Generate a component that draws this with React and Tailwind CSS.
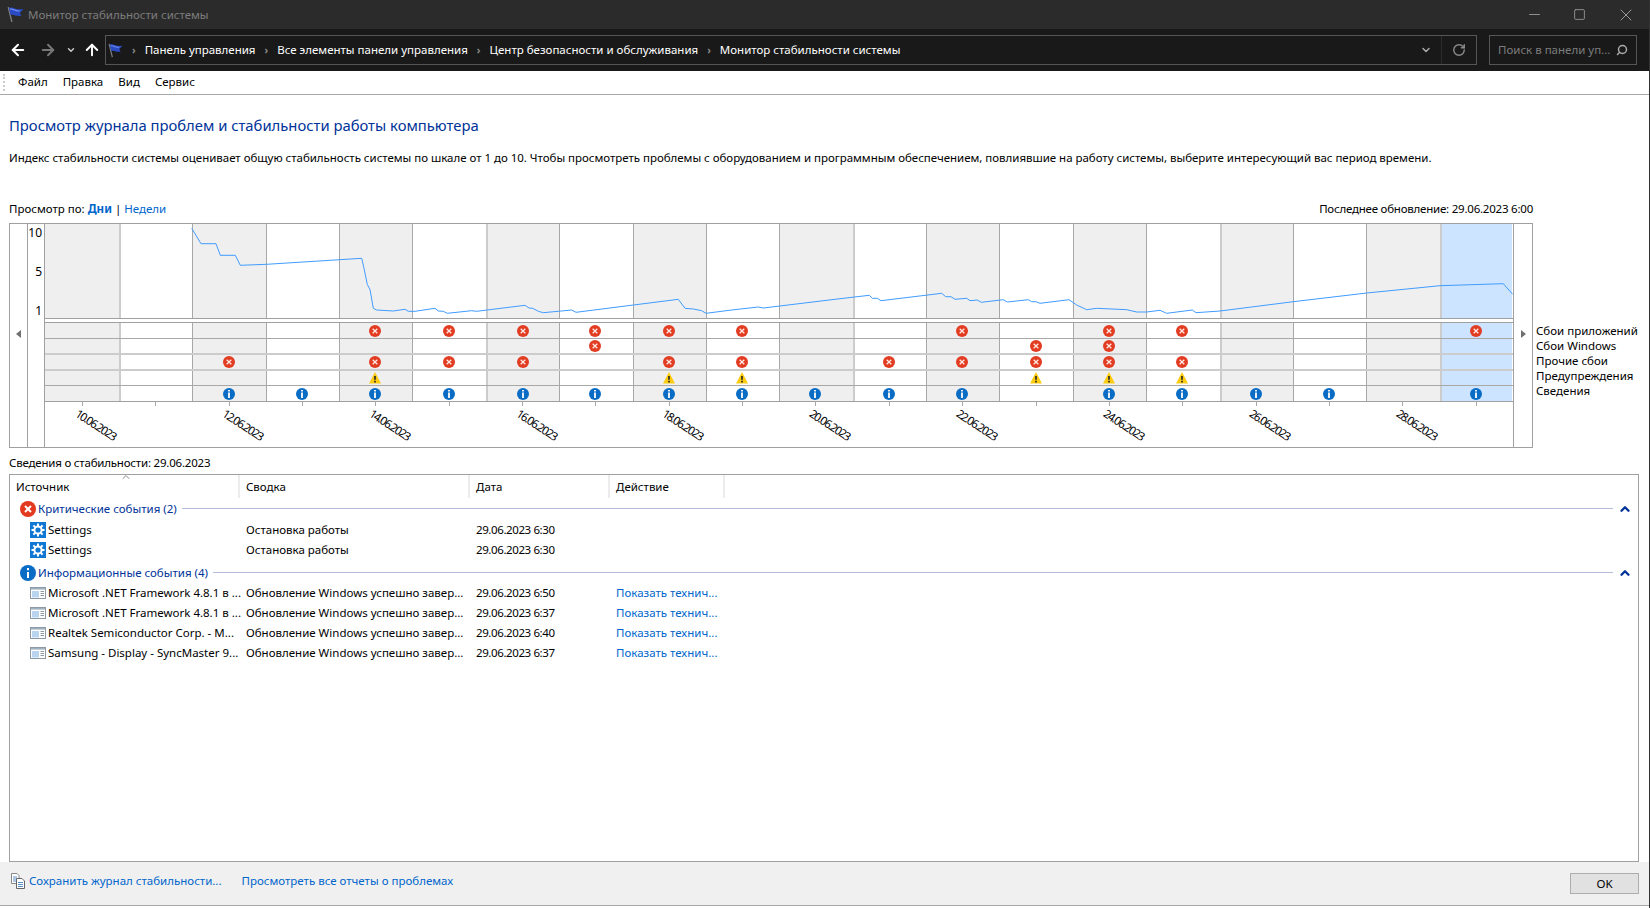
import React from 'react';
import { ArrowLeft, ArrowRight, ArrowUp, ChevronDown, ChevronUp, RotateCw, Search, Minus, Square, X } from 'lucide-react';

const FONT = 'font-["Noto_Sans",sans-serif]';
const DAY_GRID = 'grid grid-cols-[74px_repeat(19,1fr)]';

const DAYS = 20;
const CRASH_ROWS = [
  { kind: 'err', cols: [4, 5, 6, 7, 8, 9, 12, 14, 15, 19], line: 'h-[16px] border-b border-[#a8a8a8]' },
  { kind: 'err', cols: [7, 13, 14], line: 'h-[16px] border-b-2 border-[#cccccc]' },
  { kind: 'err', cols: [2, 4, 5, 6, 8, 9, 11, 12, 13, 14, 15], line: 'h-[16px] border-b-2 border-[#cccccc]' },
  { kind: 'warn', cols: [4, 8, 9, 13, 14, 15], line: 'h-[15px] border-b border-[#a8a8a8]' },
  { kind: 'info', cols: [2, 3, 4, 5, 6, 7, 8, 9, 10, 11, 12, 14, 15, 16, 17, 19], line: 'h-[16px] border-b border-[#a0a0a0]' },
];

const THICK_LINES = [1, 6, 11, 16, 19];

// page coordinates, read off the reference
const INDEX_LINE = [
  [191.7, 228.3], [201, 243.7], [216, 243.7], [220.3, 255.3], [235.3, 255.3], [240.3, 265.3], [266.7, 264.3],
  [361.7, 258.3], [364, 268.3], [367.3, 284.5], [370, 289.5], [373.3, 308.3], [376.7, 310], [393.3, 311],
  [405, 309.3], [408.3, 311.3], [415, 311.3], [435, 308.3], [438.3, 311], [443.3, 311.3], [447.3, 313.3],
  [471.7, 310.7], [476.7, 311.3], [525, 305.3], [529, 308], [532.7, 308.3], [538.3, 311.3], [543.3, 312.7],
  [571.7, 310], [576, 312.3], [678.3, 299.3], [685, 308.3], [693.3, 309], [701.7, 310.7], [706, 313.3],
  [731.7, 310], [758.3, 307], [763.3, 308], [840, 298.7], [869.3, 295.3], [872.3, 298.3], [877.3, 298.3],
  [881, 300.7], [941.7, 293.3], [945.7, 296.7], [951, 296.7], [955, 299.3], [966.7, 298.3], [970, 300.7],
  [977.3, 300], [981.3, 302.3], [1003.3, 299.7], [1007.3, 302], [1028.3, 299.7], [1031.7, 301.7], [1036, 301.7],
  [1040, 303.3], [1069, 299.7], [1076.7, 305], [1086.7, 309.7], [1096.7, 308.3], [1126.7, 309.7], [1136.7, 312],
  [1146.7, 312], [1160, 310.3], [1166.7, 313.3], [1192.3, 310], [1196, 312.7], [1220, 311], [1293.3, 301.7],
  [1366.7, 293], [1440, 285.7], [1503.3, 283.7], [1512.7, 294.3],
];

const FlagIcon = ({ className }) => (
  <svg viewBox="0 0 16 16" className={className}>
    <path d="M1.2 1 L4.6 15" stroke="#808080" strokeWidth="1.3" />
    <path d="M1.8 1.8 C5 0 7.5 4 15.5 3 L12 6.5 L13.5 9.2 C8.5 10.2 6 7.2 3.4 8.6 Z" fill="#2a4bc4" />
    <path d="M2.8 3 C5 2.2 7.5 5 12 4.6" stroke="#7893f2" strokeWidth="1" fill="none" />
  </svg>
);

const ErrorDot = () => (
  <svg viewBox="0 0 12 12" className="w-3 h-3">
    <circle cx="6" cy="6" r="6" fill="#e23c22" />
    <path d="M3.7 3.7 L8.3 8.3 M8.3 3.7 L3.7 8.3" stroke="#ffe9e4" strokeWidth="1.3" />
  </svg>
);

const WarnDot = () => (
  <svg viewBox="0 0 12 12" className="w-3 h-3">
    <path d="M6 0 L12 11.6 L0 11.6 Z" fill="#fccb12" />
    <path d="M6 4 L6 7.8 M6 8.8 L6 10.4" stroke="#222" strokeWidth="1.6" />
  </svg>
);

const InfoDot = () => (
  <svg viewBox="0 0 12 12" className="w-3 h-3">
    <circle cx="6" cy="6" r="6" fill="#0a6cc4" />
    <path d="M6 2 V3.4 M6 4.4 V10" stroke="#fff" strokeWidth="1.8" />
  </svg>
);

const SettingsIcon = () => (
  <svg viewBox="0 0 16 16" className="w-4 h-4 shrink-0">
    <rect width="16" height="16" fill="#0f78d4" />
    <circle cx="8" cy="8" r="3.6" fill="none" stroke="#fff" strokeWidth="2" />
    <path d="M8 1.5 V4 M8 12 V14.5 M1.5 8 H4 M12 8 H14.5 M3.4 3.4 L5.2 5.2 M10.8 10.8 L12.6 12.6 M12.6 3.4 L10.8 5.2 M5.2 10.8 L3.4 12.6" stroke="#fff" strokeWidth="2" />
  </svg>
);

const UpdateIcon = () => (
  <svg viewBox="0 0 16 16" className="w-4 h-4 shrink-0">
    <rect x="0.5" y="2.5" width="15" height="11" fill="#fff" stroke="#8d9aa6" />
    <rect x="1" y="3" width="14" height="1.6" fill="#9fb0bf" />
    <rect x="2" y="6" width="7" height="6.5" fill="#b9d4ee" />
    <path d="M10.5 6.5 H14 M10.5 8.5 H14 M10.5 10.5 H14" stroke="#8d9aa6" />
  </svg>
);

const DocsIcon = () => (
  <svg viewBox="0 0 16 16" className="w-4 h-4 shrink-0">
    <path d="M1.5 0.5 H7 L9 2.5 V10.5 H1.5 Z" fill="#fff" stroke="#888" />
    <path d="M3 4 H7 M3 6 H7 M3 8 H7" stroke="#5a8fc8" />
    <path d="M6.5 5.5 H12 L14.5 8 V15.5 H6.5 Z" fill="#fff" stroke="#666" />
    <path d="M8 9.5 H13 M8 11.5 H13 M8 13.5 H13" stroke="#5a8fc8" />
  </svg>
);

const Crumb = ({ children }) => (
  <>
    <span className="mx-[9px] text-[10px] font-bold text-[#8a8a8a]">›</span>
    <span className="text-white">{children}</span>
  </>
);

const ReliabilityChart = () => {
  const points = INDEX_LINE.map((p) => p.join(',')).join(' ');
  const cols = Array.from({ length: DAYS }, (_, i) => i);

  const bg = (i) => (i === 19 ? 'bg-[#cce4ff] border-r border-r-white' : i % 2 === 0 ? 'bg-[#efefef]' : 'bg-white');
  const vline = (i) => {
    if (i === 0) return '';
    return THICK_LINES.includes(i) ? 'border-l-2 border-l-[#cccccc]' : 'border-l border-l-[#a8a8a8]';
  };

  return (
    <div className="flex items-start mt-[6px]">
      <div className="flex w-[1524px] h-[225px] ml-[9px] border border-[#a0a0a0]">
        <div className="w-[18px] shrink-0 border-r border-[#a0a0a0] h-full pt-[106px] pl-[6px]">
          <div className="w-0 h-0 border-y-[4px] border-y-transparent border-r-[5px] border-r-[#707070]" />
        </div>
        <div className="w-[17px] shrink-0 border-r border-[#a0a0a0] h-[223px] flex flex-col items-end pr-[2px] text-[12px] leading-none text-black">
          <span className="mt-[3px]">10</span>
          <span className="mt-[27px]">5</span>
          <span className="mt-[27px]">1</span>
        </div>
        <div className="w-[1468px] shrink-0 flex flex-col">
          <div className={`relative h-[95px] border-b border-[#a0a0a0] ${DAY_GRID}`}>
            {cols.map((i) => (
              <div key={i} className={`${bg(i)} ${vline(i)}`} />
            ))}
            <svg viewBox="45 224 1468 94" className="absolute inset-0 w-full h-[94px]">
              <polyline points={points} fill="none" stroke="#409cff" strokeWidth="1" />
            </svg>
          </div>
          <div className="h-[4px] border-b border-[#a0a0a0]" />
          {CRASH_ROWS.map((row, r) => (
            <div key={r} className={`${row.line} ${DAY_GRID}`}>
              {cols.map((i) => (
                <div key={i} className={`${bg(i)} ${vline(i)} pr-[2px] flex items-center justify-center`}>
                  {row.cols.includes(i) && (row.kind === 'err' ? <ErrorDot /> : row.kind === 'warn' ? <WarnDot /> : <InfoDot />)}
                </div>
              ))}
            </div>
          ))}
          <div className={`${DAY_GRID} h-[45px]`}>
            {cols.map((i) => (
              <div key={i} className="flex flex-col items-center">
                <div className="w-px h-[4px] bg-[#a8a8a8]" />
                {i % 2 === 0 && i < 19 && (
                  <span className="text-[11.5px] leading-none tracking-[-1.3px] whitespace-nowrap text-black rotate-[33deg] translate-x-[14px] translate-y-[13px]">
                    {`${10 + i}.06.2023`}
                  </span>
                )}
              </div>
            ))}
          </div>
        </div>
        <div className="flex-1 border-l border-[#a0a0a0] pt-[106px] pl-[7px]">
          <div className="w-0 h-0 border-y-[4px] border-y-transparent border-l-[5px] border-l-[#707070]" />
        </div>
      </div>
      <div className="ml-[3px] mt-[100px] flex flex-col leading-[15px] text-black">
        <span>Сбои приложений</span>
        <span>Сбои Windows</span>
        <span>Прочие сбои</span>
        <span>Предупреждения</span>
        <span>Сведения</span>
      </div>
    </div>
  );
};

const GroupHeader = ({ icon, title, className }) => (
  <div className={`flex items-center pl-[10px] ${className}`}>
    {icon}
    <span className="ml-[2px] text-[#003399] whitespace-nowrap">{title}</span>
    <div className="flex-1 h-px bg-[#b4bedc] ml-[5px]" />
    <ChevronUp className="w-[14px] h-[14px] text-[#003399] ml-[5px] mr-[6px]" strokeWidth={4} />
  </div>
);

const EventRow = ({ icon, source, summary, date, action }) => (
  <div className="flex items-center h-5 text-black whitespace-nowrap">
    <div className="w-[230px] pl-[20px] flex items-center gap-[2px] shrink-0">
      {icon}
      <span>{source}</span>
    </div>
    <div className="w-[230px] pl-[6px] shrink-0">{summary}</div>
    <div className="w-[140px] pl-[6px] shrink-0 tracking-[-0.4px]">{date}</div>
    <div className="pl-[6px] text-[#0066cc]">{action}</div>
  </div>
);

const ColHead = ({ w, children }) => (
  <div className={`${w} h-full pl-[6px] flex items-center border-r-2 border-[#ececec] shrink-0`}>{children}</div>
);

const UPDATE = 'Обновление Windows успешно завер...';
const SHOW = 'Показать технич...';

export default function App() {
  return (
    <div className={`${FONT} relative w-[1650px] h-[908px] overflow-hidden bg-white text-[11.5px] text-black flex flex-col border-r border-[#333]`}>
      {/* title bar */}
      <div className="h-[29px] bg-[#2b2b2b] flex items-center pl-[7px] shrink-0">
        <FlagIcon className="w-[17px] h-[17px]" />
        <span className="ml-[4px] text-[#7d7d7d]">Монитор стабильности системы</span>
        <div className="ml-auto flex items-center text-[#9a9a9a]">
          <Minus className="w-[17px] h-[17px] mr-[30px]" strokeWidth={1.3} />
          <Square className="w-[13px] h-[13px] mr-[30px]" strokeWidth={1.6} />
          <X className="w-[20px] h-[20px] mr-[13px]" strokeWidth={1.2} />
        </div>
      </div>

      {/* nav bar */}
      <div className="h-[42px] bg-[#191919] flex items-center shrink-0">
        <ArrowLeft className="w-[18px] h-[18px] text-white ml-[9px]" strokeWidth={2.6} />
        <ArrowRight className="w-[18px] h-[18px] text-[#777] ml-[12px]" strokeWidth={2.6} />
        <ChevronDown className="w-[10px] h-[10px] text-[#ccc] ml-[9px]" strokeWidth={3.5} />
        <ArrowUp className="w-[18px] h-[18px] text-white ml-[7px]" strokeWidth={2.6} />
        <div className="ml-[4px] w-[1372px] h-[30px] border border-[#555] flex items-center pl-[2px]">
          <FlagIcon className="w-[15px] h-[15px]" />
          <Crumb>Панель управления</Crumb>
          <Crumb>Все элементы панели управления</Crumb>
          <Crumb>Центр безопасности и обслуживания</Crumb>
          <Crumb>Монитор стабильности системы</Crumb>
          <ChevronDown className="ml-auto w-[12px] h-[12px] text-[#aaa]" strokeWidth={3} />
          <div className="w-px h-full bg-[#2c2c2c] ml-[9px]" />
          <RotateCw className="w-[14px] h-[14px] text-[#8a8a8a] mx-[10px]" strokeWidth={2.5} />
        </div>
        <div className="ml-[12px] w-[148px] h-[30px] border border-[#555] flex items-center pl-[8px] text-[#7d7d7d]">
          <span className="whitespace-nowrap">Поиск в панели уп...</span>
          <Search className="ml-auto mr-[8px] w-[12px] h-[12px] -scale-x-100 text-[#aaa]" strokeWidth={3} />
        </div>
      </div>

      {/* menu */}
      <div className="h-[24px] flex items-center border-b border-[#a8a8a8] shrink-0 pl-[18px] pb-[1px] gap-[15px] relative">
        <div className="absolute left-[3px] top-[3px] h-[17px] w-px border-l-2 border-dotted border-[#ccc]" />
        <span>Файл</span>
        <span>Правка</span>
        <span>Вид</span>
        <span>Сервис</span>
      </div>

      {/* body */}
      <div className="flex-1 flex flex-col min-h-0">
        <h1 className="mt-[19px] ml-[9px] text-[14.8px] leading-[22px] text-[#003399]">Просмотр журнала проблем и стабильности работы компьютера</h1>
        <p className="mt-[14px] ml-[9px] leading-4 whitespace-nowrap tracking-[-0.023px]">
          Индекс стабильности системы оценивает общую стабильность системы по шкале от 1 до 10. Чтобы просмотреть проблемы с оборудованием и программным обеспечением, повлиявшие на работу системы, выберите интересующий вас период времени.
        </p>

        <div className="mt-[35px] flex items-center justify-between w-[1524px] ml-[9px] leading-4">
          <div>
            Просмотр по: <span className="font-bold text-[#0066cc]">Дни</span> | <span className="text-[#0066cc]">Недели</span>
          </div>
          <div className="tracking-[-0.22px]">Последнее обновление: 29.06.2023 6:00</div>
        </div>

        <ReliabilityChart />

        <div className="ml-[9px] mt-[7px] leading-4 tracking-[-0.2px]">Сведения о стабильности: 29.06.2023</div>

        <div className="relative ml-[9px] mr-[10px] mt-[3px] flex-1 min-h-0 border border-[#a0a0a0]">
          <ChevronUp className="absolute left-[110px] -top-[4px] w-3 h-3 text-[#888]" strokeWidth={2} />
          <div className="flex h-[23px]">
            <ColHead w="w-[230px]">Источник</ColHead>
            <ColHead w="w-[230px]">Сводка</ColHead>
            <ColHead w="w-[140px]">Дата</ColHead>
            <ColHead w="w-[115px]">Действие</ColHead>
          </div>
          <GroupHeader
            className="h-[22px] pb-px"
            title="Критические события (2)"
            icon={
              <svg viewBox="0 0 16 16" className="w-4 h-4 shrink-0">
                <circle cx="8" cy="8" r="8" fill="#e2391f" />
                <path d="M5 5 L11 11 M11 5 L5 11" stroke="#fff" strokeWidth="2" />
              </svg>
            }
          />
          <EventRow icon={<SettingsIcon />} source="Settings" summary="Остановка работы" date="29.06.2023 6:30" />
          <EventRow icon={<SettingsIcon />} source="Settings" summary="Остановка работы" date="29.06.2023 6:30" />
          <GroupHeader
            className="h-[23px] pt-[2px]"
            title="Информационные события (4)"
            icon={
              <svg viewBox="0 0 16 16" className="w-4 h-4 shrink-0">
                <circle cx="8" cy="8" r="8" fill="#0a6cc4" />
                <path d="M8 7 V13 M8 3 V5.2" stroke="#fff" strokeWidth="2" />
              </svg>
            }
          />
          <EventRow icon={<UpdateIcon />} source="Microsoft .NET Framework 4.8.1 в ..." summary={UPDATE} date="29.06.2023 6:50" action={SHOW} />
          <EventRow icon={<UpdateIcon />} source="Microsoft .NET Framework 4.8.1 в ..." summary={UPDATE} date="29.06.2023 6:37" action={SHOW} />
          <EventRow icon={<UpdateIcon />} source="Realtek Semiconductor Corp. - M..." summary={UPDATE} date="29.06.2023 6:40" action={SHOW} />
          <EventRow icon={<UpdateIcon />} source="Samsung - Display - SyncMaster 9..." summary={UPDATE} date="29.06.2023 6:37" action={SHOW} />
        </div>

        {/* footer */}
        <div className="h-[44px] bg-[#f0f0f0] border-b border-[#a8a8a8] flex items-center shrink-0 mb-[2px] pl-[10px] text-[#0066cc]">
          <div className="flex items-center mb-[6px]">
            <DocsIcon />
            <span className="ml-[3px]">Сохранить журнал стабильности...</span>
            <span className="ml-[20px]">Просмотреть все отчеты о проблемах</span>
          </div>
          <button className="ml-auto mr-[10px] w-[69px] h-[21px] bg-[#e1e1e1] border border-[#adadad] text-black">OK</button>
        </div>
      </div>
    </div>
  );
}
